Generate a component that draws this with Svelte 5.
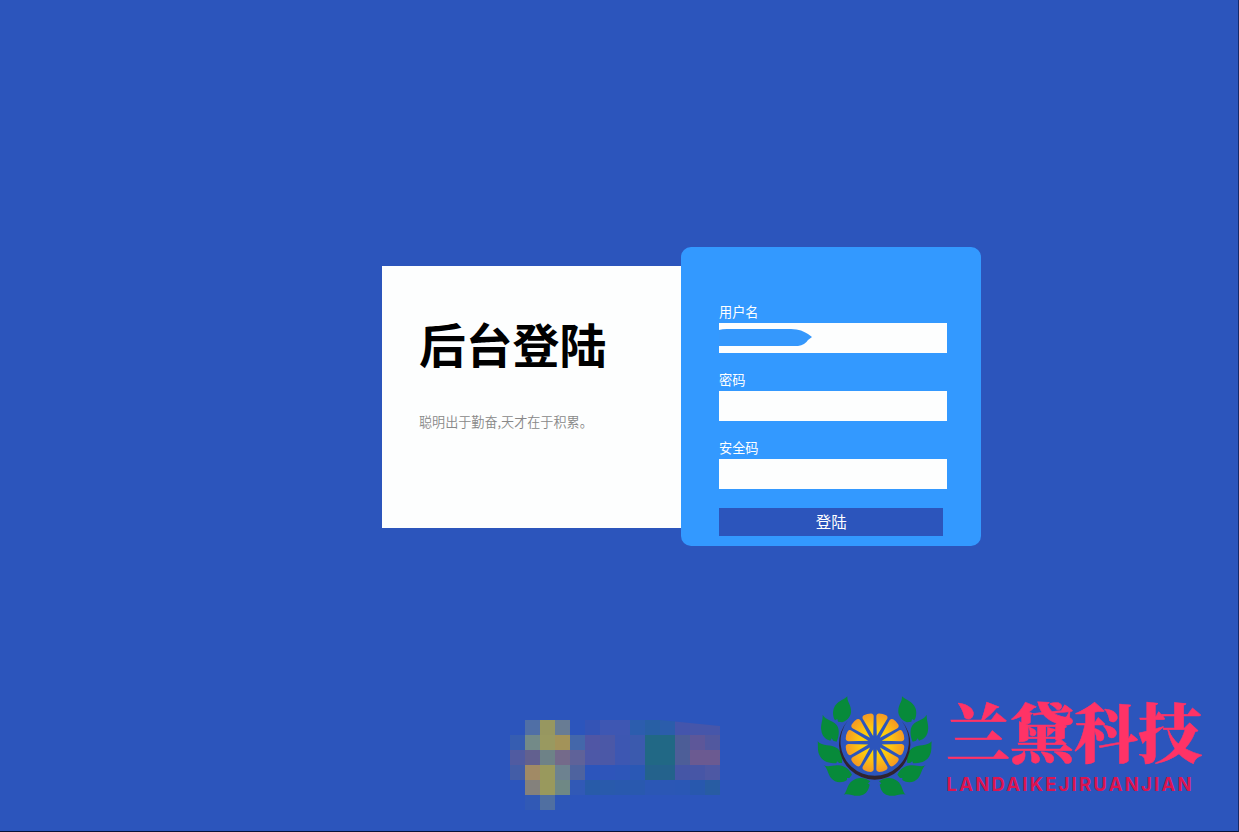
<script>
  const fields = [
    { label: '用户名', name: 'user', masked: true },
    { label: '密码', name: 'password', masked: false },
    { label: '安全码', name: 'code', masked: false }
  ];

  const _ = 'transparent';
  const mosaic = [
    [_, '#506fa6', '#979760', '#687c94', _, '#3454b6', '#3e57b3', '#3e57b3', '#2c5dae', '#285fa5', '#2b5dab', '#4455ac', '#4656aa', '#4656aa'],
    ['#365db1', '#738a88', '#999960', '#a39359', '#4467aa', '#5056a5', '#4b58a7', '#3d57b2', '#3b5aae', '#216885', '#216885', '#4c5d97', '#5d5799', '#51589f'],
    ['#505ba1', '#62608f', '#6e8287', '#746a8a', '#5f6299', '#4d58a7', '#4b58a7', '#3d57b2', '#3b5aae', '#216885', '#216885', '#4d5e98', '#6b5a91', '#6b5a91'],
    ['#435da7', '#a18a65', '#99995d', '#6d8290', '#4e639f', '#2c55bc', '#2e55ba', '#2d56b9', '#2a58b5', '#24628c', '#24628c', '#4556a6', '#4756a6', '#4d58a4'],
    [_, '#84817c', '#99995d', '#6f8885', '#3159b6', '#285ba9', '#295aac', '#2959ae', '#2959af', '#2b57b5', '#2b57b5', '#2a57b5', '#2858ae', '#285ca3'],
    [_, '#3159b5', '#506fa1', '#2e57b8', _, _, _, _, _, _, _, _, _, _]
  ];

  const leaves = [
    'M112 19C102 30 79 33 71 56C67 70 70 83 75 91L82 87L84 95L97 97C112 91 125 78 123 60C122 43 111 36 112 19Z',
    'M38 74C39 91 31 104 34 121C36 139 47 149 61 152L65 145L70 152L80 155C87 140 90 119 80 105C67 89 46 91 38 74Z',
    'M23 154C25 168 21 184 30 199C40 216 58 220 79 220L81 214L88 219L96 219C98 203 96 186 82 175C63 162 37 170 23 154Z',
    'M41 226C53 234 52 250 63 264C75 279 96 280 111 270L111 264L118 264L126 254C118 238 104 227 85 226C66 225 56 233 41 226Z',
    'M101 314C112 305 110 285 126 273C142 260 165 262 181 274L174 280L179 284C176 299 170 311 154 316C134 322 116 308 101 314Z'
  ];
  const slices = Array.from({ length: 12 }, (_, i) => 15 + i * 30);
</script>

<main class="page">
  <section class="login">
    <div class="intro">
      <h1>后台登陆</h1>
      <p>聪明出于勤奋,天才在于积累。</p>
    </div>
    <form class="panel">
      {#each fields as field}
        <label class="field">
          <span class="caption">{field.label}</span>
          <span class="control">
            <input type="text" name={field.name} />
            {#if field.masked}
              <svg class="mask" width="96" height="20" viewBox="0 0 96 20">
                <path d="M0 2Q3 1 8 1H72Q78 1.200 82 2.500Q86 4 89 6L93 9L89 12Q86 17 79 18H0Z" fill="#3598fc" />
              </svg>
            {/if}
          </span>
        </label>
      {/each}
      <button type="button">登陆</button>
    </form>
  </section>

  <footer class="footer">
    <div class="mosaic">
      {#each mosaic as row}
        {#each row as cell}
          <i style="background:{cell}"></i>
        {/each}
      {/each}
    </div>
    <div class="brand">
      <svg class="emblem" width="130" height="112" viewBox="0 0 390 336">
        <defs>
          <radialGradient id="citrus" gradientUnits="userSpaceOnUse" cx="0" cy="0" r="90">
            <stop offset="0.15" stop-color="#fee000" />
            <stop offset="0.55" stop-color="#fdc411" />
            <stop offset="1" stop-color="#f59724" />
          </radialGradient>
          <g id="branch">
            {#each leaves as d}
              <path {d} fill="#078a3a" />
            {/each}
          </g>
        </defs>
        <use href="#branch" />
        <use href="#branch" transform="translate(388 0) scale(-1 1)" />
        <path d="M113 92A107 107 0 1 0 275 92A102.500 102.500 0 1 1 113 92Z" fill="#30232f" />
        <g transform="translate(195 158)">
          {#each slices as angle}
            <path
              transform="rotate({angle})"
              d="M0 -21L16.500 -77Q19 -85 11 -88Q0 -91 -11 -88Q-19 -85 -16.500 -77Z"
              fill="url(#citrus)"
            />
          {/each}
        </g>
      </svg>
      <svg class="wordmark" width="270" height="112" viewBox="0 0 270 112">
        <text class="name" x="6" y="66.800" textLength="256">兰黛科技</text>
        <text class="latin" x="6.500" y="101.300" textLength="245">LANDAIKEJIRUANJIAN</text>
      </svg>
    </div>
  </footer>
</main>

<style>
  :global(body) {
    margin: 0;
    background: #2c55bc;
  }
  .page {
    box-sizing: border-box;
    width: 1239px;
    height: 832px;
    padding-top: 247px;
    display: flex;
    flex-direction: column;
    justify-content: space-between;
    overflow: hidden;
    background: #2c55bc;
    border-right: 1px solid #142a68;
    border-bottom: 1px solid #071238;
    font-family: 'Noto Sans CJK SC', sans-serif;
  }
  .login {
    display: flex;
    align-items: flex-start;
    margin-left: 382px;
  }
  .intro {
    box-sizing: border-box;
    width: 299px;
    height: 262px;
    margin-top: 18.500px;
    padding: 42px 0 0 37px;
    background: #fdfefe;
    box-shadow: 10px 0 0 #fdfefe;
  }
  h1 {
    margin: 0;
    font-size: 46.800px;
    line-height: 70px;
    font-weight: 700;
    color: #000;
    white-space: nowrap;
  }
  p {
    margin: 34px 0 0;
    font-size: 13.100px;
    line-height: 20px;
    font-weight: 350;
    color: #888;
  }
  .panel {
    position: relative;
    box-sizing: border-box;
    width: 300px;
    height: 299.400px;
    padding: 55px 0 0 38px;
    border-radius: 10px;
    background: #3399ff;
  }
  .field {
    display: block;
    height: 68.200px;
    font-size: 13.200px;
    color: #fff;
  }
  .caption {
    display: block;
    height: 21px;
    line-height: 20.600px;
  }
  .control {
    display: block;
    position: relative;
    width: 228px;
    height: 30px;
  }
  input {
    display: block;
    box-sizing: border-box;
    width: 228px;
    height: 30px;
    padding: 0 8px;
    border: 0;
    background: #fdfefe;
    outline: none;
  }
  .mask {
    position: absolute;
    left: 0;
    top: 5px;
  }
  button {
    display: block;
    width: 224.400px;
    height: 28px;
    margin-top: 1px;
    padding: 0;
    border: 0;
    background: #2c55bc;
    color: #fff;
    font: 400 15.500px/27px 'Noto Sans CJK SC', sans-serif;
  }
  .footer {
    display: flex;
    align-items: flex-start;
    height: 141px;
    padding-left: 510px;
  }
  .mosaic {
    display: grid;
    grid-template-columns: repeat(14, 15px);
    grid-auto-rows: 15px;
    margin-top: 30px;
    clip-path: polygon(0 0, 150px 0, 210px 6px, 210px 100%, 0 100%);
  }
  .brand {
    display: flex;
    margin-left: 90px;
  }
  .emblem,
  .wordmark {
    flex: none;
  }
  .wordmark {
    overflow: visible;
  }
  .name {
    font-family: 'Noto Serif CJK SC', 'Noto Sans CJK SC', serif;
    font-size: 64px;
    font-weight: 900;
    fill: #ff3366;
    stroke: #ff3366;
    stroke-width: 0.500px;
  }
  .latin {
    font: 700 18.500px Inter, sans-serif;
    fill: #dc1450;
  }
</style>
